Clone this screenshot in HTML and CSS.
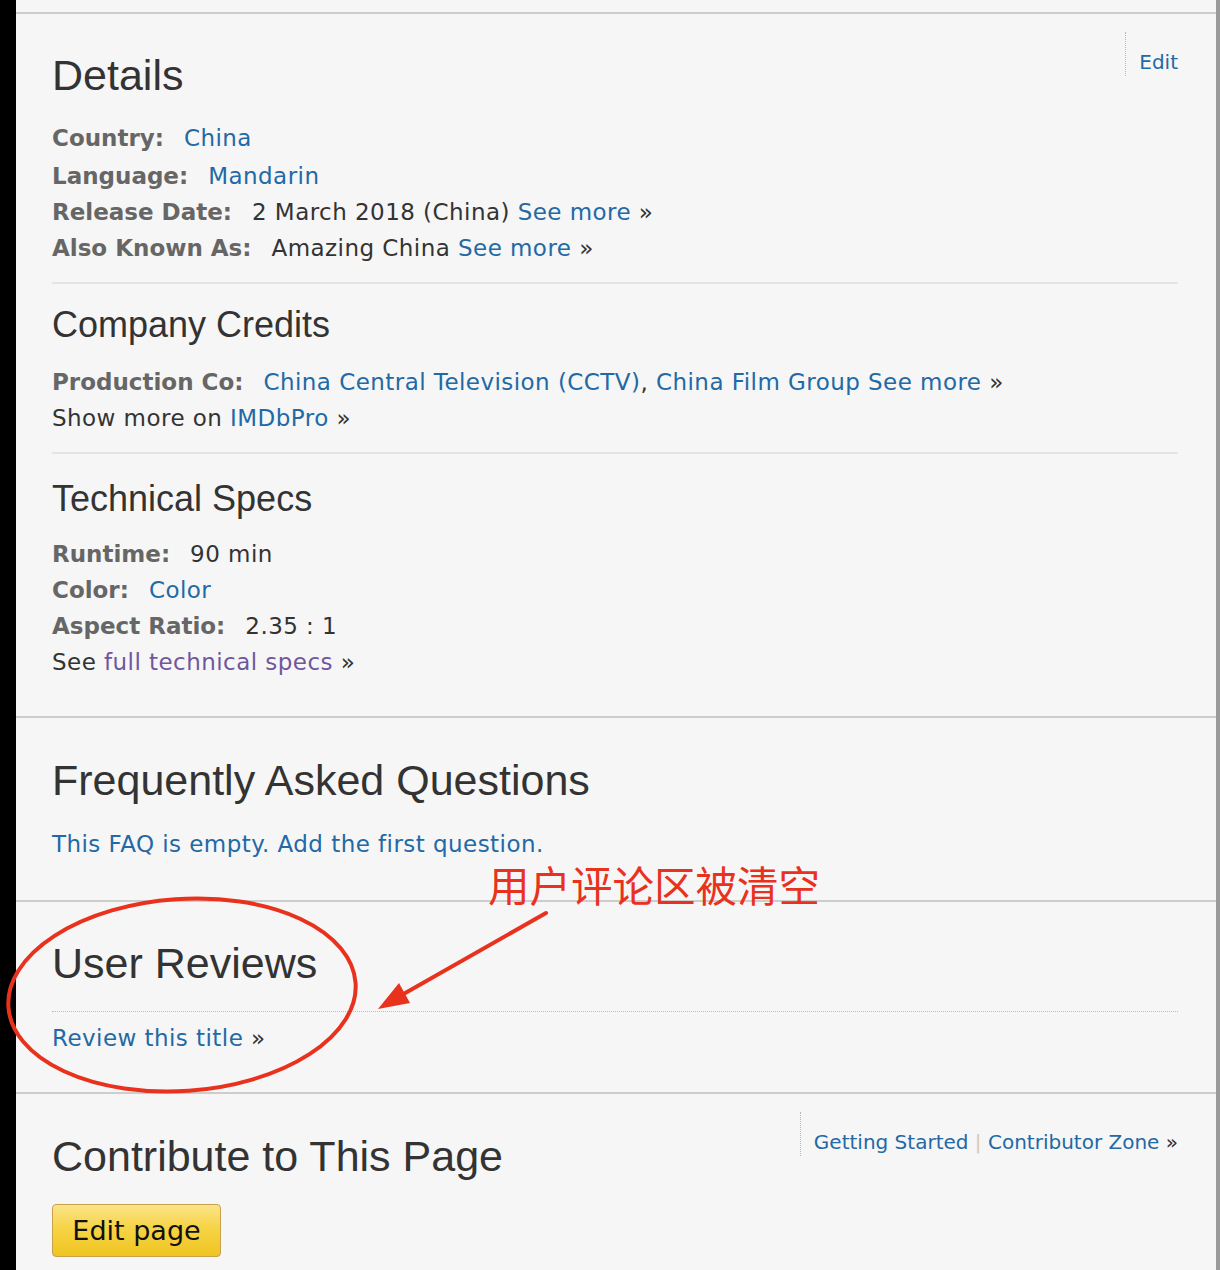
FILE: index.html
```html
<!DOCTYPE html>
<html lang="en">
<head>
<meta charset="utf-8">
<title>Details</title>
<link rel="stylesheet" href="styles.css">
</head>
<body>
<div class="page">
  <div class="strip"></div>
  <main class="main">
    <section class="article">
      <div class="head-row">
        <h2 class="h2 h2-details">Details</h2>
        <div class="side-links"><a href="#" class="lnk">Edit</a></div>
      </div>
      <div class="row row-first"><h4 class="lbl">Country:</h4><a href="#" class="lnk">China</a></div>
      <div class="row"><h4 class="lbl">Language:</h4><a href="#" class="lnk">Mandarin</a></div>
      <div class="row"><h4 class="lbl">Release Date:</h4>2 March 2018 (China) <a href="#" class="lnk">See more</a>&nbsp;»</div>
      <div class="row"><h4 class="lbl">Also Known As:</h4>Amazing China <a href="#" class="lnk">See more</a>&nbsp;»</div>
      <div class="sep"></div>
      <h3 class="h3">Company Credits</h3>
      <div class="row row-after-h3"><h4 class="lbl">Production Co:</h4><a href="#" class="lnk">China Central Television (CCTV)</a>, <a href="#" class="lnk">China Film Group</a> <a href="#" class="lnk">See more</a>&nbsp;»</div>
      <div class="row">Show more on <a href="#" class="lnk">IMDbPro</a>&nbsp;»</div>
      <div class="sep"></div>
      <h3 class="h3 h3-tech">Technical Specs</h3>
      <div class="row row-after-tech"><h4 class="lbl">Runtime:</h4>90 min</div>
      <div class="row"><h4 class="lbl">Color:</h4><a href="#" class="lnk">Color</a></div>
      <div class="row"><h4 class="lbl">Aspect Ratio:</h4>2.35 : 1</div>
      <div class="row">See <a href="#" class="lnk visited">full technical specs</a>&nbsp;»</div>
    </section>

    <section class="article article-faq">
      <h2 class="h2">Frequently Asked Questions</h2>
      <div class="row row-after-h2"><a href="#" class="lnk">This FAQ is empty. Add the first question.</a></div>
    </section>

    <section class="article article-reviews">
      <h2 class="h2">User Reviews</h2>
      <div class="dotted"></div>
      <div class="row row-review"><a href="#" class="lnk">Review this title</a>&nbsp;»</div>
    </section>

    <section class="article article-contrib">
      <div class="head-row">
        <h2 class="h2 h2-contrib">Contribute to This Page</h2>
        <div class="side-links"><a href="#" class="lnk">Getting Started</a> <span class="ghost">|</span> <a href="#" class="lnk">Contributor Zone</a>&nbsp;»</div>
      </div>
      <button class="btn" type="button">Edit page</button>
    </section>
  </main>
</div>

<div class="annot">
  <svg class="annot-svg" width="1220" height="1270" viewBox="0 0 1220 1270">
    <ellipse cx="182" cy="995" rx="174" ry="96" transform="rotate(-4 182 995)" fill="none" stroke="#e8321e" stroke-width="4"/>
    <line x1="546" y1="913" x2="400" y2="996" stroke="#e8321e" stroke-width="4" stroke-linecap="round"/>
    <polygon points="378,1009 399,983 410,1003" fill="#e8321e"/>
  </svg>
  <div class="annot-text">用户评论区被清空</div>
</div>
</body>
</html>
```

FILE: styles.css
```css
* { box-sizing: border-box; }

html, body {
  margin: 0;
  padding: 0;
  background: #f6f6f6;
}

body {
  font-family: "DejaVu Sans", Verdana, sans-serif;
  font-size: 23px;
  color: #333;
  width: 1220px;
  height: 1270px;
  overflow: hidden;
  position: relative;
}

.page {
  display: flex;
  width: 1220px;
  min-height: 1270px;
}

.strip {
  width: 16px;
  flex: 0 0 16px;
  background: #000;
}

.main {
  flex: 1 1 auto;
  padding-top: 12px;
  border-right: 4px solid #9a9a9a;
  background: #f6f6f6;
}

.article {
  border-top: 2px solid #cdcdcd;
  padding: 18px 38px 36px 36px;
}

.article-faq { padding-top: 38px; padding-bottom: 38px; }
.article-reviews { padding-top: 37px; padding-bottom: 36px; }
.article-contrib { padding-top: 18px; padding-bottom: 40px; }

.head-row {
  display: flex;
  justify-content: space-between;
  align-items: flex-start;
}

.h2 {
  font-family: "Liberation Sans", Arial, sans-serif;
  font-weight: normal;
  font-size: 43px;
  line-height: 48px;
  color: #333;
  margin: 0;
}

.h2-details { margin-top: 19px; }
.h2-contrib { margin-top: 20px; }

.h3 {
  font-family: "Liberation Sans", Arial, sans-serif;
  font-weight: normal;
  font-size: 36px;
  line-height: 40px;
  color: #333;
  margin: 21px 0 0;
}

.h3-tech { margin-top: 25px; }

.side-links {
  height: 44px;
  border-left: 1px dotted #b8b8b8;
  padding: 16px 0 0 13px;
  font-size: 20px;
  line-height: 28px;
  color: #333;
  white-space: nowrap;
}

.ghost {
  color: #d9c9ad;
}

.row {
  line-height: 36px;
  white-space: nowrap;
  letter-spacing: 0.45px;
}

.row-first { margin-top: 21px; margin-bottom: 2px; }
.row-after-h3 { margin-top: 19px; }
.row-after-tech { margin-top: 17px; }
.row-after-h2 { margin-top: 22px; }
.row-review { margin-top: 8px; }

.lbl {
  display: inline-block;
  margin: 0 20px 0 0;
  font-size: 23px;
  font-weight: bold;
  color: #666;
  letter-spacing: 0;
}

.lnk {
  color: #2269a5;
  text-decoration: none;
}

.lnk.visited {
  color: #70579d;
}

.sep {
  height: 2px;
  margin-top: 16px;
  background: #e4e4e4;
  border-radius: 1px;
}

.dotted {
  margin-top: 24px;
  border-top: 1px dotted #bdbdbd;
  height: 0;
}

.btn {
  display: block;
  margin-top: 24px;
  width: 169px;
  height: 53px;
  padding: 0;
  border: 1px solid #c9a14a;
  border-radius: 4px;
  background: linear-gradient(to bottom, #fbe48a 0%, #f6d445 45%, #f0c421 100%);
  font-family: "DejaVu Sans", Verdana, sans-serif;
  font-size: 27px;
  line-height: 51px;
  color: #111;
  text-align: center;
}

.annot {
  position: absolute;
  left: 0;
  top: 0;
  width: 1220px;
  height: 1270px;
  pointer-events: none;
}

.annot-svg {
  position: absolute;
  left: 0;
  top: 0;
}

.annot-text {
  position: absolute;
  left: 488px;
  top: 864px;
  font-family: "Noto Sans CJK SC", sans-serif;
  font-size: 41.5px;
  line-height: 1;
  color: #e8321e;
  white-space: nowrap;
  letter-spacing: 0;
}
```
